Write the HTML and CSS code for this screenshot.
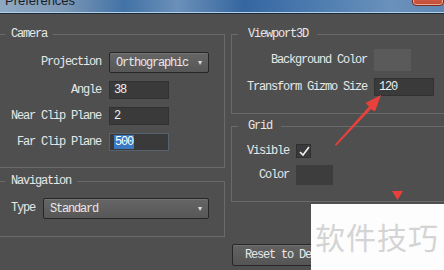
FILE: index.html
```html
<!DOCTYPE html>
<html lang="en">
<head>
    <meta charset="UTF-8">
    <title>Preferences</title>
    <link rel="stylesheet" href="styles.css">
</head>
<body>
    <div class="titlebar">
        <span class="title">Preferences</span>
        <span class="close"></span>
    </div>
    <div class="panes">
        <div class="col col-left">
            <fieldset class="group group-left camera">
                <legend>Camera</legend>
                <div class="form">
                    <label>Projection</label>
                    <div class="combo combo-short"><span>Orthographic</span><span class="caret">&#9662;</span></div>
                    <label>Angle</label>
                    <div class="field">38</div>
                    <label>Near Clip Plane</label>
                    <div class="field">2</div>
                    <label>Far Clip Plane</label>
                    <div class="field focused"><span class="selected">500</span></div>
                </div>
            </fieldset>
            <fieldset class="group group-left navigation">
                <legend>Navigation</legend>
                <div class="form">
                    <label>Type</label>
                    <div class="combo combo-wide"><span>Standard</span><span class="caret">&#9662;</span></div>
                </div>
            </fieldset>
        </div>
        <div class="col col-right">
            <fieldset class="group group-right viewport">
                <legend>Viewport3D</legend>
                <div class="form form-right">
                    <label>Background Color</label>
                    <div class="swatch swatch-bg"></div>
                    <label>Transform Gizmo Size</label>
                    <div class="field">120</div>
                </div>
            </fieldset>
            <fieldset class="group group-right grid">
                <legend>Grid</legend>
                <div class="form form-right">
                    <label>Visible</label>
                    <div class="check">
                        <svg width="12" height="11" viewBox="0 0 12 11"><polyline points="2,6 5,9 11,1" fill="none" stroke="#f2f2f2" stroke-width="1.6"/></svg>
                    </div>
                    <label>Color</label>
                    <div class="swatch swatch-grid"></div>
                </div>
            </fieldset>
            <button class="reset">Reset to Default</button>
        </div>
    </div>

    <svg class="marks" width="444" height="270" viewBox="0 0 444 270">
        <polygon points="336,146 371,109 375,111.5 381,95 365.5,103 369,106.5 335,144.5" fill="#e8413c"/>
        <polygon points="392,191 403,191 397.5,200" fill="#e8413c"/>
    </svg>
    <div class="watermark">软件技巧</div>
</body>
</html>
```

FILE: styles.css
```css
body {
    margin: 0;
    width: 444px;
    height: 270px;
    overflow: hidden;
    background: #4f4f4f;
    color: #e8e8e8;
    font-family: "Liberation Mono", monospace;
    font-size: 12px;
    letter-spacing: -1.2px;
    position: relative;
}
.titlebar {
    height: 12px;
    display: flex;
    justify-content: space-between;
    overflow: hidden;
    background: linear-gradient(90deg, #8fa9c3 0%, #7d98b6 14%, #4272a6 28%, #6b90b9 40%, #3566a0 55%, #4e7db0 72%, #6a91bb 88%, #5f88b6 100%);
    border-bottom: 1px solid #b4cfe8;
    box-shadow: 0 1px 0 #1c2a38;
}
.title {
    display: block;
    margin: -6px 0 0 5px;
    font-family: "Liberation Sans", Arial, sans-serif;
    font-size: 13px;
    line-height: 13px;
    letter-spacing: 0;
    color: #1a1f26;
}
.close {
    display: block;
    width: 30px;
    height: 14px;
    margin-top: -10px;
    background: linear-gradient(#d9735f, #c24a34);
    border: 1px solid #7e2a1e;
    border-radius: 0 0 4px 4px;
    box-shadow: inset 0 0 0 1px #e9a898;
}
.panes {
    display: flex;
    gap: 6px;
    padding-top: 15px;
    margin-left: -1px;
}
.col {
    display: flex;
    flex-direction: column;
    flex-shrink: 0;
}
.col-left {
    width: 226px;
}
.col-right {
    width: 220px;
}
.group {
    margin: 0;
    border: 1px solid #6a6a6a;
    min-width: 0;
}
.group legend {
    line-height: 13px;
    color: #e8e8e8;
}
.group-left {
    padding: 11px 8px 16px 11px;
}
.group-left legend {
    padding: 0 6px;
    margin-left: -6px;
}
.group-right {
    padding: 8px 8px 17px 15px;
}
.group-right legend {
    padding: 0 9px 0 10px;
    margin-left: -9px;
}
.navigation {
    margin-top: 7px;
    padding-top: 10px;
    padding-bottom: 17px;
}
.grid {
    margin-top: 6px;
    padding-top: 11px;
    padding-bottom: 16px;
}
.form {
    display: grid;
    grid-template-columns: max-content max-content;
    column-gap: 8px;
    row-gap: 8px;
    align-items: center;
}
.form label {
    text-align: right;
    white-space: pre;
    line-height: 13px;
}
.form-right {
    column-gap: 7px;
    row-gap: 7px;
}
.combo {
    height: 19px;
    box-sizing: content-box;
    display: flex;
    align-items: center;
    justify-content: space-between;
    padding: 0 6px;
    background: linear-gradient(#656565, #575757);
    border: 1px solid #262626;
    border-radius: 2px;
    box-shadow: inset 0 1px 0 #727272;
}
.combo-short {
    width: 86px;
}
.combo-wide {
    width: 152px;
}
.caret {
    font-family: "DejaVu Sans", sans-serif;
    font-size: 8px;
    letter-spacing: 0;
    color: #dcdcdc;
}
.field {
    width: 54px;
    height: 16px;
    line-height: 16px;
    padding: 0 0 0 4px;
    background: #3a3a3a;
    border: 1px solid #313131;
    color: #f0f0f0;
}
.field.focused {
    border-color: #56636f;
}
.selected {
    background: #3c78c2;
    color: #ffffff;
    padding: 0 1px;
}
.swatch {
    width: 37px;
}
.swatch-bg {
    height: 22px;
    background: #5a5a5a;
}
.swatch-grid {
    height: 20px;
    background: #3d3d3d;
}
.check {
    width: 13px;
    height: 12px;
    background: #3a3a3a;
    border: 1px solid #303030;
    display: flex;
    align-items: center;
    justify-content: center;
}
.reset {
    margin: 42px 0 0 1px;
    width: 130px;
    height: 22px;
    padding: 0 0 0 12px;
    text-align: left;
    font-family: "Liberation Mono", monospace;
    font-size: 12px;
    letter-spacing: -1.2px;
    color: #e8e8e8;
    background: linear-gradient(#626262, #555555);
    border: 1px solid #262626;
    border-radius: 2px;
    box-shadow: inset 0 1px 0 #707070;
}
.marks {
    position: absolute;
    left: 0;
    top: 0;
    pointer-events: none;
}
.watermark {
    position: absolute;
    left: 311px;
    top: 204px;
    width: 133px;
    height: 66px;
    box-sizing: border-box;
    padding: 14px 0 0 4px;
    background: #fdfdfd;
    color: #d4d4d4;
    font-family: "Noto Sans CJK SC", sans-serif;
    font-size: 30px;
    line-height: 36px;
    letter-spacing: 1px;
    white-space: nowrap;
}
```
